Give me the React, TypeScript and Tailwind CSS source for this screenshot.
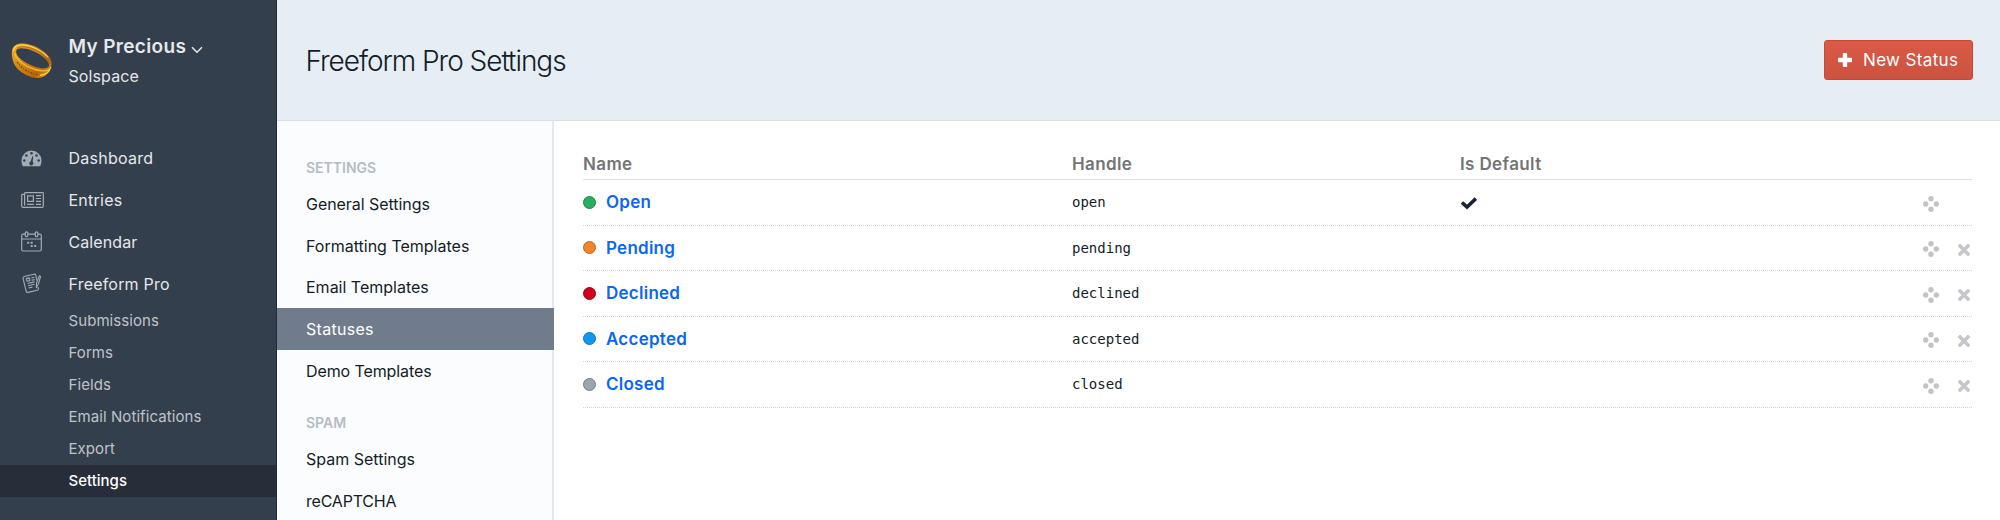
import type { ReactNode } from 'react';

function RingLogo() {
  return (
    <svg viewBox="0 0 50 50" className="h-[50px] w-[50px] shrink-0">
      <defs>
        <linearGradient id="gold" x1="0" y1="0" x2="1" y2="1">
          <stop offset="0" stopColor="#f3b52a" />
          <stop offset="0.45" stopColor="#cf8410" />
          <stop offset="0.75" stopColor="#b8690c" />
          <stop offset="1" stopColor="#eda81f" />
        </linearGradient>
      </defs>
      <path
        fill="url(#gold)"
        fillRule="evenodd"
        d="M4 15C4.500 9.500 9 7 16 7.500C25 8.300 35 13.500 40.500 20C43.500 23.500 44.300 28 43 31C41 37.500 37 41.800 30 42C22 42 12.500 37 8 31C5 27 3.300 20 4 15ZM8.300 14.500C7.500 17.500 10 21 14 24C20 28.500 29 32.300 36 32.200C40 32.100 41.500 30.500 40.800 28C39.500 23 32 17.700 24.500 14.700C17 11.800 9.300 11.300 8.300 14.500Z"
      />
      <path d="M9 12.500C12 9.500 20 10.700 27 13.600C34 17 40.500 22 41.500 28" fill="none" stroke="#a96b0a" strokeWidth="0.9" />
      <path d="M5.500 15C5.500 11 9 8.700 15 9C24 9.500 35 15.500 40 21" fill="none" stroke="#ffdb62" strokeWidth="1.100" />
      <path d="M6.500 17C8 24 17 30.500 27 33.500C34 35.500 41 35.500 43 31" fill="none" stroke="#f4b931" strokeWidth="1.400" />
      <path d="M9 26C14 33 22 37.500 30 38.800" fill="none" stroke="#7f4708" strokeWidth="1.200" strokeDasharray="2 1.200 1 1.500" />
      <path d="M32 39.300C37 38.800 40 37 42 33.500" fill="none" stroke="#ffcf45" strokeWidth="1.500" />
    </svg>
  );
}

function DashboardIcon() {
  return (
    <svg viewBox="0 0 21 17" className="h-[17px] w-[21px]">
      <path fill="#a3abb4" d="M10.500 0.500A10 10 0 0 0 0.500 10.500c0 2 .4 4 1.300 5.700h17.400c.9-1.700 1.300-3.700 1.300-5.700A10 10 0 0 0 10.500 .5Z" />
      <g fill="#333f4d">
        <circle cx="10.500" cy="3.300" r="1.250" />
        <circle cx="5.400" cy="5.400" r="1.250" />
        <circle cx="15.600" cy="5.400" r="1.250" />
        <circle cx="3.300" cy="10.500" r="1.250" />
        <circle cx="17.700" cy="10.500" r="1.250" />
        <path d="M11.300 6.300l.9.200-.5 5.300a2 2 0 1 1-2-.3Z" />
      </g>
    </svg>
  );
}

function EntriesIcon() {
  return (
    <svg viewBox="0 0 23 16" className="h-[16px] w-[23px]" fill="none" stroke="#a3abb4" strokeWidth="1.200">
      <path d="M3.600 13.500V1.300Q3.600.7 4.200.7H21.700Q22.300.7 22.300 1.300V14.500Q22.300 15.300 21.500 15.300H2Q.7 15.300.7 14V3.200Q.7 2.300 1.600 2.300H3.600V13.500" />
      <path d="M6.600 3.900h5.800v5.500H6.600zM6.200 12.300h6.600M15 3.700h5M15 6.500h5M15 9.400h5M15 12.300h5" />
    </svg>
  );
}

function CalendarIcon() {
  return (
    <svg viewBox="0 0 21 21" className="h-[21px] w-[21px]" fill="none" stroke="#a3abb4" strokeWidth="1.200">
      <path d="M4.200 3.200H2.200Q.7 3.200.7 4.700V18.500Q.7 20 2.200 20H18.800Q20.300 20 20.300 18.500V4.700Q20.300 3.200 18.800 3.200H16.900M6.900 3.200h7.300M.7 8h19.600" />
      <rect x="4.300" y="0.900" width="2.500" height="4.700" rx="1.200" />
      <rect x="14.300" y="0.900" width="2.500" height="4.700" rx="1.200" />
      <path d="M6.200 11.800h2M9.700 11.800h2M9.700 15h2M13.200 15h2" strokeWidth="2" />
    </svg>
  );
}

function FreeformIcon() {
  return (
    <svg viewBox="0 0 20 21" className="h-[21px] w-[20px]" fill="none" stroke="#a3abb4" strokeWidth="1.100" strokeLinejoin="round">
      <path d="M14.900 7.500L13.800 2.200Q13.400.9 12 1.200L2.200 3.500Q.8 3.900 1.100 5.300L4.100 18Q4.500 19.700 6 19.400L15.200 17.300Q16.700 16.900 16.400 15.400L16 14" />
      <path d="M18.600 3.200L16.600 10.500L14.300 14.800L14.500 10L17.300 2.900Z" />
      <path d="M4.300 5.600l3-.7.600 2.700-2.900.7zM9.300 5l3-.7M9.700 7.300l3-.7M5.500 10.500l7-1.600M6 12.800l6.500-1.500M6.500 15l4-.9" />
    </svg>
  );
}

function PlusIcon() {
  return (
    <svg viewBox="0 0 14 14" className="h-[14px] w-[14px]">
      <path fill="#fff" d="M5.600 0h2.800q.8 0 .8.800V4.800h4q.8 0 .8.800v2.800q0 .8-.8.800h-4v4q0 .8-.8.800H5.600q-.8 0-.8-.8v-4h-4q-.8 0-.8-.8V5.600q0-.8.800-.8h4V.8q0-.8.800-.8Z" />
    </svg>
  );
}

function CheckIcon() {
  return (
    <svg viewBox="0 0 16 13" className="mt-[3px] h-[13px] w-[16px]">
      <path d="M2.200 6.600L6 10L13.600 2.800" fill="none" stroke="#1b2330" strokeWidth="3.500" strokeLinecap="square" strokeLinejoin="miter" />
    </svg>
  );
}

function MoveIcon() {
  return (
    <svg viewBox="0 0 16 16" className="h-4 w-4" fill="#c4c4c4">
      <circle cx="8" cy="2.700" r="2.700" />
      <circle cx="2.700" cy="8" r="2.700" />
      <circle cx="13.300" cy="8" r="2.700" />
      <circle cx="8" cy="13.300" r="2.700" />
    </svg>
  );
}

function RemoveIcon() {
  return (
    <svg viewBox="0 0 12 12" className="h-[12px] w-[12px]">
      <path d="M2 2L10 10M10 2L2 10" stroke="#c4c7c9" strokeWidth="3.600" strokeLinecap="square" />
    </svg>
  );
}

function NavItem({ icon, label, className }: { icon: ReactNode; label: string; className: string }) {
  return (
    <li className="flex h-[41.8px] items-center">
      <span className="flex w-[68.5px] items-center pl-[21px]">{icon}</span>
      <span className={className}>{label}</span>
    </li>
  );
}

const subItems = ['Submissions', 'Forms', 'Fields', 'Email Notifications', 'Export'];

function SettingsItem({ label, className = '' }: { label: string; className?: string }) {
  return <li className={`flex h-[41.8px] items-center pl-[29px] ${className}`}>{label}</li>;
}

const statuses = [
  { name: 'Open', handle: 'open', dot: 'bg-[#27ae60] border-[#1d8449]', isDefault: true },
  { name: 'Pending', handle: 'pending', dot: 'bg-[#f2842d] border-[#b8681f]', isDefault: false },
  { name: 'Declined', handle: 'declined', dot: 'bg-[#d0021b] border-[#a00215]', isDefault: false },
  { name: 'Accepted', handle: 'accepted', dot: 'bg-[#0d99f2] border-[#0b74b8]', isDefault: false },
  { name: 'Closed', handle: 'closed', dot: 'bg-[#9aa5b1] border-[#737d88]', isDefault: false },
];

export default function App() {
  return (
    <div className="flex h-[520px] w-[2000px] overflow-hidden bg-white font-['Inter','Liberation_Sans',sans-serif] text-base text-[#131c28]">
      <aside className="w-[277px] shrink-0 border-r border-[#1d2b3c] bg-[#333f4d] text-[#e6e8ea]">
        <div className="flex h-[137.4px] pt-9">
          <div className="w-[68.5px] pl-2">
            <RingLogo />
          </div>
          <div className="pt-px">
            <div className="flex h-[20px] items-center text-[19px] font-semibold tracking-[0.35px]">
              My Precious
              <svg viewBox="0 0 12 8" className="mt-[5px] ml-[5px] h-[8px] w-[12px]" fill="none" stroke="#e6e8ea" strokeWidth="1.500">
                <path d="M1 1.200L6 6.300L11 1.200" />
              </svg>
            </div>
            <div className="mt-[9px] flex h-[20px] items-center tracking-[0.1px]">Solspace</div>
          </div>
        </div>
        <ul>
          <NavItem icon={<DashboardIcon />} label="Dashboard" className="tracking-[0.25px]" />
          <NavItem icon={<EntriesIcon />} label="Entries" className="tracking-[0.25px]" />
          <NavItem icon={<CalendarIcon />} label="Calendar" className="tracking-[0.1px]" />
          <NavItem icon={<span className="pl-px"><FreeformIcon /></span>} label="Freeform Pro" className="tracking-[0.2px]" />
        </ul>
        <ul className="text-[15px] text-[#c0c4c8]">
          {subItems.map((label) => (
            <li key={label} className="flex h-[32.1px] items-center pt-px pl-[68.5px] tracking-[0.07px]">
              {label}
            </li>
          ))}
          <li className="flex h-[32px] items-center bg-[#272e39] pl-[68.5px] font-medium text-white">Settings</li>
        </ul>
      </aside>

      <div className="flex min-w-0 flex-1 flex-col">
        <header className="flex h-[121px] shrink-0 items-center justify-between border-b border-[#dcdfe3] bg-[#e6edf4] pr-[27px] pl-[28.5px]">
          <h1 className="pt-px text-[28px] font-light tracking-[-1.03px]">Freeform Pro Settings</h1>
          <button className="flex h-[40px] w-[149px] items-center rounded-[3px] border border-[#cd4632] bg-linear-to-b from-[#da5a47] to-[#cb533f] pl-[13px] text-[17px] tracking-[0.35px] text-white">
            <PlusIcon />
            <span className="ml-[11px] pt-px">New Status</span>
          </button>
        </header>

        <div className="flex flex-1">
          <nav className="w-[277px] shrink-0 border-r-2 border-[#e6e8eb] bg-[#fbfcfe] pt-[32px]">
            <h2 className="flex h-[30px] items-center pb-px pl-[29px] text-[14px] font-semibold text-[#b4bcc4]">SETTINGS</h2>
            <ul>
              <SettingsItem label="General Settings" className="tracking-[-0.05px]" />
              <SettingsItem label="Formatting Templates" />
              <SettingsItem label="Email Templates" />
              <SettingsItem label="Statuses" className="-mr-0.5 bg-[#707c8b] tracking-[0.28px] text-white" />
              <SettingsItem label="Demo Templates" className="tracking-[-0.1px]" />
            </ul>
            <h2 className="mt-[16px] flex h-[30px] items-center pl-[29px] text-[14px] font-semibold text-[#b4bcc4]">SPAM</h2>
            <ul>
              <SettingsItem label="Spam Settings" />
              <SettingsItem label="reCAPTCHA" className="tracking-[-0.2px]" />
            </ul>
          </nav>

          <main className="flex-1 pr-[28px] pl-[29px]">
            <div className="flex h-[59px] items-end border-b border-[#e0e1e2] pb-[2px] text-[17px] font-semibold tracking-[0.37px] text-[#737476]">
              <div className="w-[489px]">Name</div>
              <div className="w-[388px]">Handle</div>
              <div>Is Default</div>
            </div>
            {statuses.map((s) => (
              <div key={s.name} className="flex h-[45.5px] items-center border-b border-dotted border-[#d5d5d5]">
                <div className="flex w-[489px] items-center">
                  <span className={`h-[13px] w-[13px] rounded-full border ${s.dot}`} />
                  <span className="ml-[10px] pt-px text-[17px] font-semibold tracking-[0.25px] text-[#0a66f5]">{s.name}</span>
                </div>
                <div className="w-[389px] pt-px font-['DejaVu_Sans_Mono',monospace] text-[14px] text-[#131c28]">{s.handle}</div>
                <div className="flex-1">{s.isDefault && <CheckIcon />}</div>
                <div className="flex w-[49px] items-center justify-between pt-[3px]">
                  <MoveIcon />
                  {!s.isDefault && <span className="mr-[2px] pt-px"><RemoveIcon /></span>}
                </div>
              </div>
            ))}
          </main>
        </div>
      </div>
    </div>
  );
}
